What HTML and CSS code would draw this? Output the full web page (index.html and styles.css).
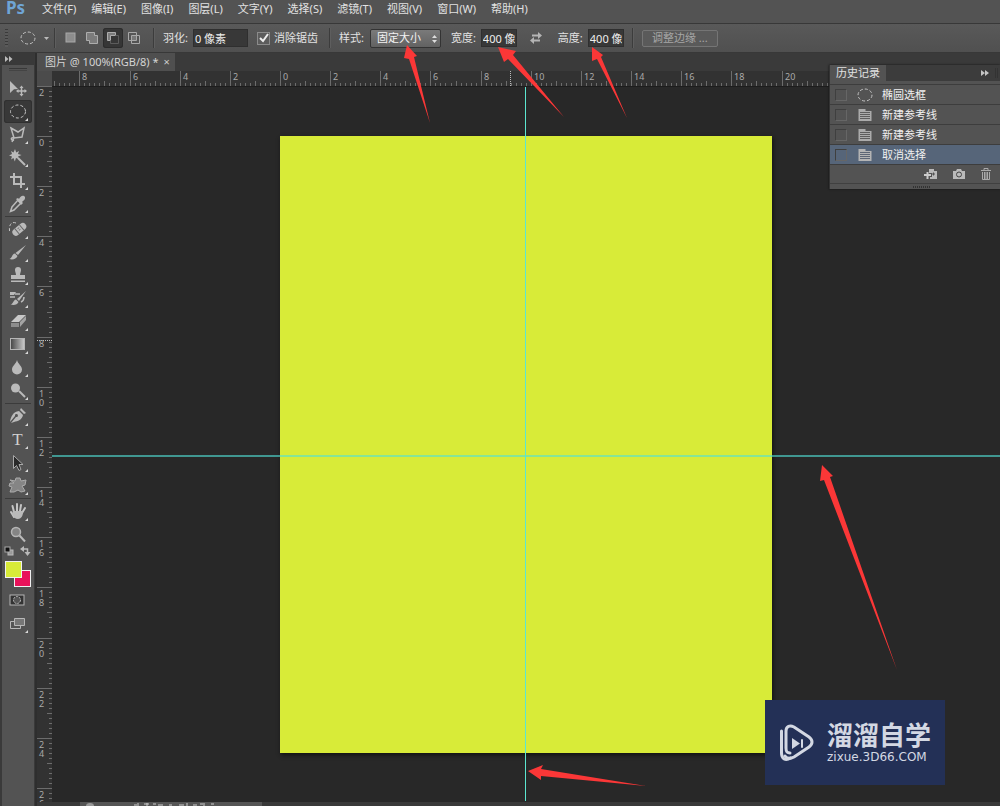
FILE: index.html
```html
<!DOCTYPE html>
<html lang="zh-CN">
<head>
<meta charset="utf-8">
<title>图片 @ 100%(RGB/8)</title>
<link rel="stylesheet" href="styles.css">
</head>
<body>
<nav class="menubar">
  <span class="brand">Ps</span>
  <button class="menu">文件(F)</button><button class="menu">编辑(E)</button><button class="menu">图像(I)</button><button class="menu">图层(L)</button><button class="menu">文字(Y)</button><button class="menu">选择(S)</button><button class="menu">滤镜(T)</button><button class="menu">视图(V)</button><button class="menu">窗口(W)</button><button class="menu">帮助(H)</button>
</nav>

<section class="options">
  <span class="grip"></span>
  <button class="preset" aria-label="椭圆选框工具">
    <svg width="30" height="18" viewBox="0 0 30 18"><ellipse cx="8" cy="9" rx="7" ry="6" class="dash"/><path d="M24 8h5l-2.500 3z" class="fill"/></svg>
  </button>
  <i class="sep"></i>
  <div class="modes">
    <button class="mode" aria-label="新选区"><svg width="14" height="14"><rect x="2" y="2" width="9" height="9" fill="#8d8d8d" stroke="#a8a8a8"/></svg></button>
    <button class="mode" aria-label="添加到选区"><svg width="14" height="14"><path d="M1.500 1.500h8v3h3v8h-8v-3h-3z" fill="#7c7c7c" stroke="#adadad"/></svg></button>
    <button class="mode active" aria-label="从选区减去"><svg width="14" height="14"><path d="M1.500 1.500h8v3h-5v5h-3z" fill="#7c7c7c" stroke="#adadad"/><path d="M9.500 4.500h3v8h-8v-3" fill="none" stroke="#5c5c5c"/></svg></button>
    <button class="mode" aria-label="与选区交叉"><svg width="14" height="14"><path d="M1.500 1.500h8v8h-8zM4.500 4.500h8v8h-8z" fill="none" stroke="#a8a8a8"/><rect x="5" y="5" width="4" height="4" fill="#777"/></svg></button>
  </div>
  <i class="sep"></i>
  <label for="feather">羽化:</label>
  <input class="field wide" id="feather" type="text" value="0 像素">
  <input class="check" id="aa" type="checkbox" checked><label for="aa">消除锯齿</label>
  <i class="sep gap-left"></i>
  <label for="style">样式:</label>
  <span class="selectbox">
    <select id="style"><option>固定大小</option><option>正常</option></select>
    <svg class="updown" width="7" height="10"><path d="M1 4l2.500-3 2.500 3zM1 6l2.500 3 2.500-3z" fill="#ddd"/></svg>
  </span>
  <label class="pair" for="w">宽度:</label>
  <input class="field" id="w" type="text" value="400 像素">
  <button class="swap" aria-label="高度和宽度互换"><svg width="14" height="12" viewBox="0 0 14 12"><path d="M3 2.500h6V0l4 3.500L9 7V4.500H3zM11 7.500H5V5L1 8.500 5 12V9.500h6z" fill="#b4b4b4"/></svg></button>
  <label for="h">高度:</label>
  <input class="field" id="h" type="text" value="400 像素">
  <i class="sep"></i>
  <button class="refine" disabled>调整边缘 ...</button>
</section>

<main class="workspace">
  <aside class="toolbar">
    <div class="toolhead"><svg width="8" height="6"><path d="M0 0l3.500 3L0 6zM4 0l3.500 3L4 6z" fill="#bbb"/></svg></div>
    <div class="toolgrip"></div>
    <button class="tool" aria-label="移动"><svg viewBox="0 0 28 23"><path class="fill" d="M6 4l8 8-4 .3L6 16z"/><path class="line" d="M17.500 10v8M13.500 14h8"/><path class="fill" d="M17.500 8.500l2 2.500h-4zM17.500 19.500l2-2.500h-4zM12 14l2.500-2v4zM23 14l-2.500-2v4z"/></svg></button>
    <button class="tool active" aria-label="椭圆选框"><svg viewBox="0 0 28 23"><ellipse class="dash" cx="14" cy="11.500" rx="7.500" ry="6.500"/><path class="fly" d="M24 18v3h-3z"/></svg></button>
    <button class="tool" aria-label="多边形套索"><svg viewBox="0 0 28 23"><path class="line" d="M7 5l7 4 6-4-2 9-8 1zM10 15l-2 4M10 15c-4-1-3 3 0 2"/><path class="fly" d="M24 18v3h-3z"/></svg></button>
    <button class="tool" aria-label="魔棒"><svg viewBox="0 0 28 23"><path class="fill" d="M11 3l1.200 3.500L15 5l-1 3 3.500 1-3.500 1.500 1 2.500-3-1-1.200 3.500L9.500 12 7 13.500 8 10.500 5 9.500 8 8 7 5l2.500 1.500z"/><path class="thick" d="M14 12l7 7"/><path class="fly" d="M24 18v3h-3z"/></svg></button>
    <button class="tool" aria-label="裁剪"><svg viewBox="0 0 28 23"><path class="thick" d="M10 4v11h11M6 8h11v11"/><path class="fly" d="M24 18v3h-3z"/></svg></button>
    <button class="tool" aria-label="吸管"><svg viewBox="0 0 28 23"><path class="line" d="M14 8l3 3-7 7-3.500 1.500L8 15z"/><path class="fill" d="M12 7l2-1 1 1c1-2 3-4 5-3s1 4-1 5l-1 1 1 1-2 2z"/><path class="fly" d="M24 18v3h-3z"/></svg></button>
    <hr>
    <button class="tool" aria-label="污点修复画笔"><svg viewBox="0 0 28 23"><g transform="rotate(-40 15 11)"><rect class="fill" x="7" y="8" width="16" height="7" rx="3.500"/><path d="M12 8v7M18 8v7" stroke="#666"/><path d="M14 10h2M14 12h2" stroke="#777"/></g><path class="dash" d="M12 5C7 3 4 8 6 15"/><path class="fly" d="M24 18v3h-3z"/></svg></button>
    <button class="tool" aria-label="画笔"><svg viewBox="0 0 28 23"><path class="fill" d="M22 4l-8 10-2.500-2zM11 12.500l2.500 2.500c-1 3-5 4-8 3 3-1 2-5 5.500-5.500z"/><path class="fly" d="M24 18v3h-3z"/></svg></button>
    <button class="tool" aria-label="仿制图章"><svg viewBox="0 0 28 23"><path class="fill" d="M11 6a3 3 0 016 0c0 2-1 3-1 5h5v4H7v-4h5c0-2-1-3-1-5zM7 16.500h14V18H7z"/><path class="fly" d="M24 18v3h-3z"/></svg></button>
    <button class="tool" aria-label="历史记录画笔"><svg viewBox="0 0 28 23"><path class="fill" d="M22 4l-7 10-2-2zM12 12.500l2.500 2.500c-1 3-5 3.500-8 2.500 3-.5 2.500-4.500 5.500-5zM6 5h6l-2 3H6z"/><path class="line" d="M11 7h5M6 10h5M17 15c2-1 3-3 3-5"/><path class="fly" d="M24 18v3h-3z"/></svg></button>
    <button class="tool" aria-label="橡皮擦"><svg viewBox="0 0 28 23"><path fill="#c8c8c8" d="M14 5h8l-7 7H7z"/><path fill="#8c8c8c" d="M7 13h8v4H7z"/><path fill="#a3a3a3" d="M16 12l6-6v4l-6 7z"/><path class="fly" d="M24 18v3h-3z"/></svg></button>
    <button class="tool" aria-label="渐变"><svg viewBox="0 0 28 23"><defs><linearGradient id="ramp"><stop stop-color="#444"/><stop offset="1" stop-color="#ccc"/></linearGradient></defs><rect x="6.500" y="5.500" width="14" height="11" fill="url(#ramp)" stroke="#b5b5b5"/><path class="fly" d="M24 18v3h-3z"/></svg></button>
    <button class="tool" aria-label="模糊"><svg viewBox="0 0 28 23"><path class="fill" d="M13 4c1 4 5 6 5 9.500a5 5 0 01-10 0C8 10 12 8 13 4z"/><path class="fly" d="M24 18v3h-3z"/></svg></button>
    <button class="tool" aria-label="减淡"><svg viewBox="0 0 28 23"><circle class="fill" cx="11.500" cy="9" r="4.500"/><path class="thick" d="M15 12l6 6"/><path class="fly" d="M24 18v3h-3z"/></svg></button>
    <hr>
    <button class="tool" aria-label="钢笔"><svg viewBox="0 0 28 23"><path class="fill" d="M17 3l5 5-2 1-4-4zM15 6l4 4c-1 5-5 6-9 7l-3 1 5-6a1.500 1.500 0 10-1-1l-5 6c1-6 3-10 9-11z"/><path class="fly" d="M24 18v3h-3z"/></svg></button>
    <button class="tool" aria-label="横排文字"><span class="type">T</span><svg class="over" viewBox="0 0 28 23"><path class="fly" d="M24 18v3h-3z"/></svg></button>
    <button class="tool" aria-label="路径选择"><svg viewBox="0 0 28 23"><path d="M9.500 4.500v13l3-3 2.500 5 2-1-2-5h4z" fill="#292929" stroke="#a8a8a8"/><path class="fly" d="M24 18v3h-3z"/></svg></button>
    <button class="tool" aria-label="自定形状"><svg viewBox="0 0 28 23"><path d="M6 6l5 1 1-3 4 0 1 3 5-1-1 5-3 1 3 5-4 1-3-2-4 2-4 0 2-5-3-1 1-3h4z" fill="#858585" stroke="#ababab" stroke-linejoin="round"/><path class="fly" d="M24 18v3h-3z"/></svg></button>
    <hr>
    <button class="tool" aria-label="抓手"><svg viewBox="0 0 28 23"><path d="M10 17l-3-5M10 12L8.500 6M13 11V4M16 11l1-6M18 13l3-5" stroke="#c5c5c5" stroke-width="2" stroke-linecap="round"/><path class="fill" d="M9 11h9l1 1c0 4-2 7-5 7s-4-2-6-5z"/><path class="fly" d="M24 18v3h-3z"/></svg></button>
    <button class="tool" aria-label="缩放"><svg viewBox="0 0 28 23"><circle cx="12" cy="9" r="4.500" fill="#858585" stroke="#b5b5b5" stroke-width="1.500"/><path class="thick" d="M15.500 12.500l5.500 6"/></svg></button>
    <div class="mini">
      <svg width="10" height="10"><rect x="4" y="4" width="5" height="5" fill="#999" stroke="#bbb"/><rect x="1" y="1" width="5" height="5" fill="#111" stroke="#aaa"/></svg>
      <svg width="11" height="10"><path d="M3 3h4.500v5" class="line"/><path class="fill" d="M0 3l4-3v6zM4.500 6h6l-3 4z"/></svg>
    </div>
    <div class="swatches"><span class="back"></span><span class="front"></span></div>
    <button class="tool" aria-label="快速蒙版"><svg viewBox="0 0 28 23"><rect x="6" y="6" width="14" height="10" fill="#333" stroke="#b5b5b5"/><circle cx="13" cy="11" r="3.500" fill="#555" stroke="#bbb" stroke-dasharray="2 1"/></svg></button>
    <button class="tool" aria-label="屏幕模式"><svg viewBox="0 0 28 23"><path d="M6.500 9.500h10v7h-10z" fill="#555" stroke="#b8b8b8"/><path d="M10.500 6.500h10v7h-10z" fill="#777" stroke="#b8b8b8"/><path class="fly" d="M24 18v3h-3z"/></svg></button>
  </aside>

  <section class="document">
    <div class="tabs"><div class="tab"><span>图片 @ 100%(RGB/8) *</span><button class="close" aria-label="关闭">×</button></div></div>
    <div class="sheet">
      <div class="corner"></div>
      <svg class="ruler top" id="ruler-top"></svg>
      <svg class="ruler side" id="ruler-side"></svg>
      <div class="stage">
        <div class="paper"></div>
        <div class="guide across"></div>
        <div class="guide down"></div>
        <div class="badge">
          <svg width="36" height="38" viewBox="0 0 36 38" fill="none" stroke="#d3d8e3" stroke-linecap="round"><path d="M2.500 7v22c0 6 4 8 9 5" stroke-width="3"/><path d="M11 29c-3 0-4-1-4-5V7c0-5 4-6 8-4l15 10c4 3 4 7 0 10L15 33c-4 2-7 2-9-1" stroke-width="3"/><path d="M13 14v11l8-5.500z" fill="#d3d8e3" stroke="none"/><path d="M23 16v7" stroke-width="2"/></svg>
          <div class="badge-text"><strong>溜溜自学</strong><span>zixue.3D66.COM</span></div>
        </div>
      </div>
    </div>
    <div class="status"><span class="strip"><svg width="182" height="4"><ellipse cx="10" cy="4" rx="4" ry="3" fill="#999"/><path d="M54 3h3M58 1v3M64 2h5M67 1v3M73 2h3M78 3h5M89 3h3M99 3h5M107 1v3M113 3h4M120 2h3M124 1v3M131 2h3" stroke="#ccc"/></svg></span></div>

    <aside class="history" id="history">
      <div class="history-head"><span class="history-tab">历史记录</span><svg width="20" height="12"><path d="M1 3l4 3-4 3zM5 3l4 3-4 3z" fill="#c5c5c5"/><path d="M15.500 1v10M17.500 1v10" stroke="#333"/></svg></div>
      <ul>
        <li><span class="box"></span><svg width="16" height="14"><ellipse class="dash" cx="8" cy="7" rx="7" ry="6"/></svg><span>椭圆选框</span></li>
        <li><span class="box"></span><svg width="16" height="14"><path d="M1.500 1h7v2h6v10h-13z" fill="#ababab"/><path d="M3 4.500h10M3 6.500h10M3 8.500h10M3 10.500h10" stroke="#5d5d5d"/></svg><span>新建参考线</span></li>
        <li><span class="box"></span><svg width="16" height="14"><path d="M1.500 1h7v2h6v10h-13z" fill="#ababab"/><path d="M3 4.500h10M3 6.500h10M3 8.500h10M3 10.500h10" stroke="#5d5d5d"/></svg><span>新建参考线</span></li>
        <li class="current"><span class="box"></span><svg width="16" height="14"><path d="M1.500 1h7v2h6v10h-13z" fill="#b4b4b4"/><path d="M3 4.500h10M3 6.500h10M3 8.500h10M3 10.500h10" stroke="#5d6675"/></svg><span>取消选择</span></li>
      </ul>
      <div class="history-foot">
        <button aria-label="新建文档"><svg width="14" height="12"><path class="fill" d="M5 1h5v2h3v8H6V9h2V5H5z"/><path d="M0 7h7M3.500 4v7" stroke="#ccc" stroke-width="2"/><path d="M8 6h3M9.500 4.500v3" stroke="#555"/></svg></button>
        <button aria-label="新建快照"><svg width="14" height="12"><path class="fill" d="M1 3h3l1-2h4l1 2h3v8H1z"/><circle cx="7" cy="6.500" r="2.500" fill="#bbb" stroke="#444"/></svg></button>
        <button aria-label="删除"><svg width="12" height="12"><path d="M1 2.500h10M4 2V.5h4V2M2.500 4v7.500h7V4M4.500 4v7M6 4v7M7.500 4v7" fill="none" stroke="#aaa"/></svg></button>
      </div>
      <div class="history-grip"></div>
    </aside>
  </section>
</main>

<svg class="arrows" width="1000" height="806" fill="#fb3737">
  <path d="M407 45l-3 13 5 1 21 64-16-66 3-1z"/>
  <path d="M498 47l6 15 4-3 56 58-51-62 3-4z"/>
  <path d="M592 47v14l5-2 30 59-26-61 2-2z"/>
  <path d="M822 465l-2 16 4-1 73 190-67-193 3-1z"/>
  <path d="M528 771l15-6-2 4 105 17-105-10v4z"/>
</svg>
<script src="rulers.js"></script>
</body>
</html>
```
FILE: styles.css
```css
* { box-sizing: border-box; }
body {
  margin: 0;
  height: 100vh;
  display: flex;
  flex-direction: column;
  overflow: hidden;
  position: relative;
  background: #535353;
  color: #e2e2e2;
  font: 11px/16px "Noto Sans", "Noto Sans CJK SC", sans-serif;
}
button, input, select { font: inherit; color: inherit; border: 0; padding: 0; margin: 0; background: none; }
svg { display: block; flex: none; }
.fill { fill: #bababa; }
.line { fill: none; stroke: #bababa; stroke-width: 1.500; }
.thick { fill: none; stroke: #bababa; stroke-width: 2; }
.dash { fill: none; stroke: #c5c5c5; stroke-dasharray: 3 2; }
.fly { fill: #d8d8d8; }

.menubar { display: flex; align-items: flex-start; gap: 15px; height: 23px; padding: 1px 6px; flex: none; }
.brand { width: 21px; color: #6fa5d6; font-size: 17px; font-weight: 700; line-height: 14px; }
.menu { white-space: nowrap; }

.options {
  display: flex;
  align-items: center;
  flex: none;
  height: 30px;
  padding-left: 5px;
  border-top: 1px solid #383838;
  border-bottom: 1px solid #383838;
  background: linear-gradient(#595959, #505050);
  white-space: nowrap;
}
.grip { width: 3px; height: 18px; margin-right: 12px; background: repeating-linear-gradient(#3a3a3a 0 1px, #5a5a5a 1px 3px); }
.sep { width: 2px; height: 20px; margin: 0 8px 0 4px; border-left: 1px solid #3c3c3c; border-right: 1px solid #5e5e5e; }
.gap-left { margin-left: 11px; }
.modes { display: flex; gap: 1px; margin-right: 5px; margin-left: -3px; }
.mode { width: 20px; height: 20px; display: grid; place-items: center; border-radius: 3px; }
.mode.active { background: #363636; box-shadow: inset 0 0 0 1px #2c2c2c; }
.field { width: 36px; height: 18px; margin: 0 0 0 5px; padding: 0 1px; background: #383838; border: 1px solid #2f2f2f; color: #eee; }
.field.wide { width: 55px; }
.check { appearance: none; width: 13px; height: 13px; margin: 0 4px 0 9px; border: 1px solid #8b8b8b; background: #5c5c5c url("data:image/svg+xml,%3Csvg xmlns='http://www.w3.org/2000/svg' viewBox='0 0 11 11'%3E%3Cpath d='M2 5l3 3 5-7' fill='none' stroke='%23eee' stroke-width='2'/%3E%3C/svg%3E"); }
.selectbox { position: relative; margin-left: 6px; }
.selectbox select { appearance: none; display: block; width: 71px; height: 19px; padding-left: 6px; border: 1px solid #333; border-radius: 2px; background: linear-gradient(#7a7a7a, #626262); color: #f2f2f2; }
.updown { position: absolute; right: 3px; top: 5px; }
.pair { margin-left: 10px; }
.swap { margin: 0 15px 0 12px; }
.field + .sep { margin-left: 8px; }
.refine { width: 76px; height: 17px; border: 1px solid #757575; border-radius: 2px; background: #5a5a5a; color: #a6a6a6; line-height: 14px; }

.workspace { flex: 1; display: flex; min-height: 0; background: #2e2e2e; }
.toolbar { width: 35px; flex: none; display: flex; flex-direction: column; align-items: center; background: #535353; border-left: 2px solid #3a3a3a; border-right: 1px solid #3a3a3a; }
.toolhead { width: 100%; height: 12px; padding: 3px; background: #393939; }
.toolgrip { width: 18px; height: 3px; margin: 3px 0 6px; border-top: 1px solid #383838; border-bottom: 1px solid #444; }
.tool { position: relative; width: 28px; height: 23px; flex: none; border-radius: 3px; }
.tool.active { background: #383838; box-shadow: inset 0 0 0 1px #303030; }
.tool svg { width: 28px; height: 23px; }
.tool .over { position: absolute; left: 0; top: 0; }
.type { display: block; padding-right: 1px; font: 17px/23px "Liberation Serif", serif; color: #d0d0d0; }
.toolbar hr { width: 26px; margin: 1px 0; border: 0; border-top: 1px solid #3b3b3b; flex: none; }
.mini { display: flex; gap: 6px; padding-right: 2px; margin-bottom: 5px; }
.swatches { position: relative; width: 26px; height: 26px; margin-bottom: 2px; }
.front, .back { position: absolute; width: 17px; height: 17px; border: 1px solid #f0f0f0; }
.front { left: 0; top: 0; background: #d8eb38; }
.back { right: 0; bottom: 0; background: #e8125a; }

.document { position: relative; flex: 1; min-width: 0; display: flex; flex-direction: column; padding-left: 2px; }
.tabs { height: 18px; flex: none; display: flex; background: #3a3a3a; }
.tab { display: flex; align-items: center; gap: 5px; padding: 0 5px 0 8px; background: #4f4f4f; color: #d4d4d4; white-space: nowrap; }
.close { font-size: 11px; line-height: 16px; color: #ccc; }
.sheet { flex: 1; min-height: 0; display: grid; grid-template: 15px minmax(0, 1fr) / 15px minmax(0, 1fr); }
.corner { background: #4b4b4b; }
.ruler { width: 100%; height: 100%; overflow: hidden; background: #323232; font-size: 9px; }
.ruler text { fill: #aaa; }
.ruler path { stroke: #6c6c6c; fill: none; shape-rendering: crispEdges; }
.ruler .cursor { stroke: #bbb; stroke-dasharray: 1 1; }
.stage { position: relative; overflow: hidden; background: #282828; border-top: 1px solid #1d1d1d; }
.paper { position: absolute; left: 228px; top: 49px; width: 492px; height: 617px; background: #d8eb38; box-shadow: 1px 2px 4px #111; }
.guide { position: absolute; }
.across { left: 0; right: 0; top: 368px; height: 2px; background: rgba(80, 225, 215, 0.6); }
.down { top: 0; bottom: 1px; left: 473px; width: 1px; background: #5ce6d0; }
.badge { position: absolute; left: 713px; top: 613px; width: 180px; height: 85px; display: flex; align-items: center; gap: 12px; padding-left: 14px; background: #233056; color: #d3d8e3; }
.badge-text { display: flex; flex-direction: column; gap: 2px; }
.badge-text strong { font-size: 26px; line-height: 26px; white-space: nowrap; }
.badge-text span { font: 12px/14px "DejaVu Sans", sans-serif; }
.status { height: 4px; flex: none; padding-left: 43px; overflow: hidden; background: #393939; }
.strip { display: block; width: 182px; height: 4px; background: #555; }

.history { position: absolute; right: 0; top: 12px; width: 171px; background: #535353; border-left: 1px solid #333; box-shadow: 0 0 2px #111; }
.history-head { display: flex; justify-content: space-between; align-items: center; height: 16px; background: #3c3c3c; }
.history-tab { padding: 0 6px; background: #535353; }
.history ul { list-style: none; margin: 0; padding: 3px 0 0; }
.history li { display: flex; align-items: center; height: 20px; padding-left: 5px; border-top: 1px solid #3d3d3d; color: #f0f0f0; }
.history li svg { margin: 0 9px 0 10px; }
.box { width: 12px; height: 12px; border: 1px solid #3f3f3f; border-right-color: #666; border-bottom-color: #666; }
.history .current { background: #566579; }
.history-foot { display: flex; justify-content: flex-end; align-items: center; gap: 14px; height: 19px; padding-right: 8px; border-top: 1px solid #3d3d3d; }
.history-grip { height: 6px; border-top: 1px solid #404040; background: repeating-linear-gradient(90deg, #333 0 1px, #535353 1px 2px) 83px 2px / 18px 2px no-repeat; }

.arrows { position: absolute; left: 0; top: 0; pointer-events: none; }
```
FILE: rulers.js
```js
// Each labelled step covers two ruler units.
const STEP = 50.15;

function drawRuler(id, origin, vertical) {
  const ruler = document.getElementById(id);
  const area = ruler.getBoundingClientRect();
  const panel = document.getElementById("history").getBoundingClientRect();
  const length = vertical ? area.height : panel.left - area.left;
  let ticks = "";
  let labels = "";
  for (let i = -50; i * STEP / 10 + origin < length; i++) {
    const at = Math.round(origin + i * STEP / 10);
    if (at < 0) continue;
    const size = i % 10 === 0 ? 15 : i % 5 === 0 ? 5 : 3;
    ticks += vertical ? `M${15 - size} ${at + 0.5}H15` : `M${at + 0.5} ${15 - size}V15`;
    if (i % 10 !== 0) continue;
    const value = String(Math.abs(i / 5));
    if (vertical) {
      [...value].forEach((digit, n) => { labels += `<text x="2" y="${at + 10 + n * 9}">${digit}</text>`; });
    } else if (at + 16 < length) {
      labels += `<text x="${at + 3}" y="9">${value}</text>`;
    }
  }
  const cursor = vertical ? "M0 254.5H15" : "M458.5 0V15";
  ruler.innerHTML = `<path d="${ticks}"/><path class="cursor" d="${cursor}"/>${labels}`;
}

function drawRulers() {
  drawRuler("ruler-top", 228, false);
  drawRuler("ruler-side", 50, true);
}

drawRulers();
window.addEventListener("resize", drawRulers);
```
